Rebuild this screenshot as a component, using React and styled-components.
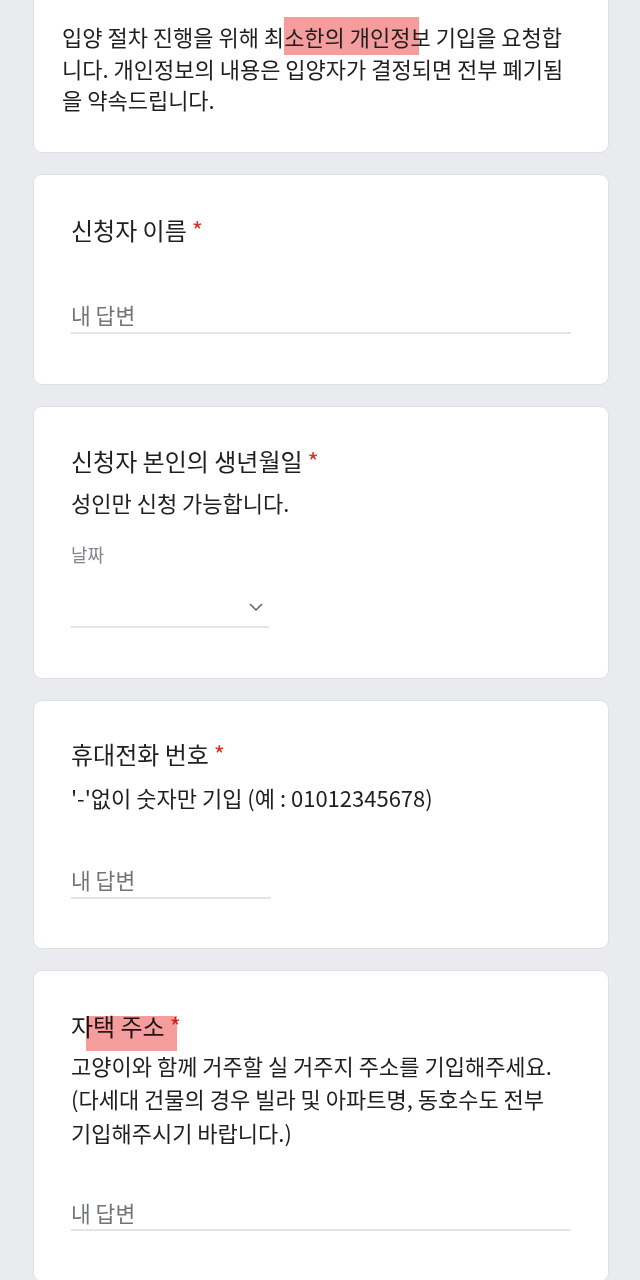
import React from 'react'
import styled, { createGlobalStyle } from 'styled-components'

const GlobalStyle = createGlobalStyle`
body {
  margin: 0;
  background: #e9ebee;
  font-family: "Noto Sans CJK KR", "Noto Sans", sans-serif;
  color: #1f1f1f;
}
`

const Page = styled.div`
display: flex;
flex-direction: column;
gap: 21px;
width: 576px;
margin-left: 33px;
margin-top: -12px;
height: 1292px;
overflow: hidden;
`

const Card = styled.div`
flex-shrink: 0;
background: #fff;
border: 1px solid #dde0e4;
border-radius: 9px;
padding: ${(p) => p.$pad || '39px 37px 50px'};
box-sizing: border-box;
`

const Intro = styled.p`
margin: 0;
font-size: 22px;
line-height: 31.5px;
white-space: nowrap;
`

const Mark = styled.span`
background: #f59c9c;
padding: 3px 8px 3px 0;
margin-right: -8px;
`

const Title = styled.div`
position: relative;
font-size: 24px;
line-height: 32px;
`

const TitleMark = styled.span`
position: absolute;
left: 15px;
top: 6px;
width: 91px;
height: 35px;
background: #f59c9c;
mix-blend-mode: multiply;
`

const Star = styled.span`
color: #d93025;
margin-left: 5px;
`

const Desc = styled.div`
margin-top: ${(p) => p.$gap || 9}px;
font-size: 22px;
line-height: ${(p) => p.$lh || 32}px;
white-space: nowrap;
`

const Input = styled.div`
display: flex;
align-items: center;
justify-content: space-between;
width: ${(p) => (p.$half ? '200px' : '100%')};
height: 36px;
margin-top: ${(p) => p.$gap || 50}px;
border-bottom: 2px solid #e2e4e7;
box-sizing: border-box;
font-size: 21.5px;
color: #70757a;
`

const DateLabel = styled.div`
margin-top: 24px;
font-size: 18px;
line-height: 24px;
color: #80868b;
`

const DateField = styled(Input)`
margin-top: 22px;
height: 40px;
width: 198px;
justify-content: flex-end;
padding-right: 6px;
`

const Chevron = () => (
    <svg width="14" height="8" viewBox="0 0 14 8">
        <path d="M1 1l6 6 6-6" fill="none" stroke="#5f6368" strokeWidth="1.5" />
    </svg>
)

const App = () => {
    return (
        <>
            <GlobalStyle />
            <Page>
                <Card $pad="32px 20px 36px 28px">
                    <Intro>
                        입양 절차 진행을 위해 최<Mark>소한의 개인정</Mark>보 기입을 요청합<br />
                        니다. 개인정보의 내용은 입양자가 결정되면 전부 폐기됨<br />
                        을 약속드립니다.
                    </Intro>
                </Card>

                <Card $pad="39px 37px 50px">
                    <Title>신청자 이름<Star>*</Star></Title>
                    <Input $gap={52}>내 답변</Input>
                </Card>

                <Card $pad="38px 37px 50px">
                    <Title>신청자 본인의 생년월일<Star>*</Star></Title>
                    <Desc>성인만 신청 가능합니다.</Desc>
                    <DateLabel>날짜</DateLabel>
                    <DateField><Chevron /></DateField>
                </Card>

                <Card $pad="37px 37px 49px">
                    <Title>휴대전화 번호<Star>*</Star></Title>
                    <Desc $gap={11}>'-'없이 숫자만 기입 (예 : 01012345678)</Desc>
                    <Input $half $gap={50}>내 답변</Input>
                </Card>

                <Card $pad="39px 37px 50px">
                    <Title>
                        자택 주소<Star>*</Star>
                        <TitleMark />
                    </Title>
                    <Desc $gap={7} $lh={33.5}>
                        고양이와 함께 거주할 실 거주지 주소를 기입해주세요.<br />
                        (다세대 건물의 경우 빌라 및 아파트명, 동호수도 전부<br />
                        기입해주시기 바랍니다.)
                    </Desc>
                    <Input $gap={46}>내 답변</Input>
                </Card>
            </Page>
        </>
    )
}

export default App
